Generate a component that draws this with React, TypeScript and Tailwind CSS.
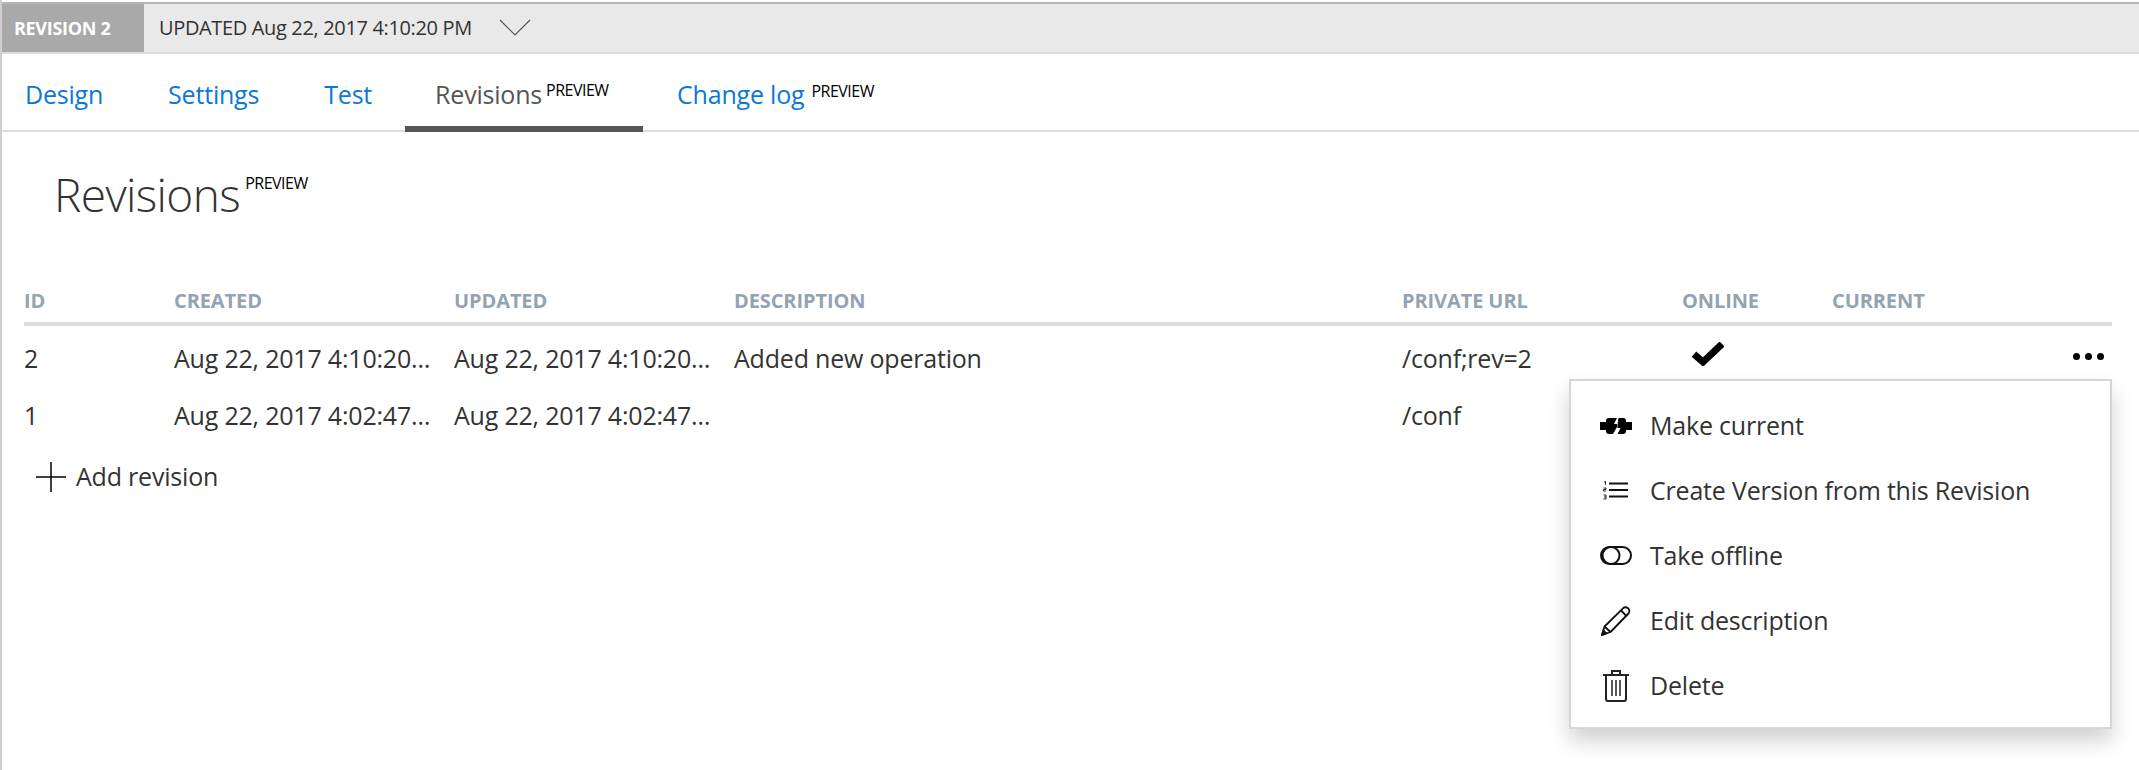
import React from "react";

const font = { fontFamily: '"Open Sans", "Noto Sans", sans-serif' };

const Preview = ({ className }: { className: string }) => (
  <span className={`font-normal text-black tracking-[-0.5px] ${className}`}>PREVIEW</span>
);

const PlugIcon = () => (
  <svg width="32" height="16" viewBox="0 0 32 16" fill="#000">
    <path d="M0 4h6V3q0-3 3-3h8l-3 6h3v3l-4 7H9q-3 0-3-3v-1H0z" />
    <path d="M18.500 0H23q3 0 3 3v1h6v8h-6v1q0 3-3 3h-5.500l3-6h-3V7z" />
  </svg>
);

const ListIcon = () => (
  <svg width="25" height="19" viewBox="0 0 25 19" fill="none" stroke="#111">
    <path d="M6 2.500h19M6 9h19M6 15.500h19" strokeWidth="2" />
    <path d="M1 1l1.500-.5V4M.5 7h2.500v1.500H.5V10H3M.5 14H3v4H.5M1 16h2" strokeWidth="0.9" />
  </svg>
);

const ToggleIcon = () => (
  <svg width="32" height="19" viewBox="0 0 32 19" fill="none" stroke="#111" strokeWidth="2">
    <rect x="1" y="1" width="30" height="17" rx="8.500" />
    <circle cx="11" cy="9.500" r="8.500" />
  </svg>
);

const PencilIcon = () => (
  <svg width="30" height="30" viewBox="0 0 30 30" fill="none" stroke="#111" strokeWidth="1.800" strokeLinejoin="round">
    <path d="M1 29l2.500-8.500L22 2.300q2.500-2 5 0t.5 5.200L9.500 26z" />
    <path d="M3.500 20.500l6 5.500M20 4.500l5.500 5.500" />
    <path d="M1 29l1.300-4.500 3.200 3z" fill="#111" />
  </svg>
);

const TrashIcon = () => (
  <svg width="26" height="32" viewBox="0 0 26 32" fill="none" stroke="#222" strokeWidth="2">
    <path d="M0 5h26M9 5V1h8v4M3 5v24q0 2 2 2h16q2 0 2-2V5" />
    <path d="M9 10v16M13 10v16M17 10v16" strokeWidth="1.500" />
  </svg>
);

const menuItems = [
  { label: "Make current", icon: <PlugIcon /> },
  { label: "Create Version from this Revision", icon: <ListIcon /> },
  { label: "Take offline", icon: <ToggleIcon /> },
  { label: "Edit description", icon: <PencilIcon /> },
  { label: "Delete", icon: <TrashIcon /> },
];

const columns = "grid grid-cols-[150px_280px_280px_668px_280px_150px_1fr]";

const RowMenu = () => (
  <div className="absolute left-[1567px] top-[379px] flex h-[350px] w-[543px] flex-col border-2 border-[#d6d6d6] bg-white pt-[12px] shadow-[0_12px_20px_rgba(0,0,0,0.18)]">
    {menuItems.map((item) => (
      <div key={item.label} className="flex h-[65px] shrink-0 items-center">
        <div className="flex w-[79px] shrink-0 justify-center pl-[10px]">{item.icon}</div>
        <span className="text-[25px] tracking-[-0.2px] text-[#333]">{item.label}</span>
      </div>
    ))}
  </div>
);

export default function App() {
  return (
    <div style={font} className="relative h-[770px] w-[2139px] overflow-hidden border-l-2 border-[#cfcfcf] bg-white">
      <div className="h-[2px] bg-white" />
      {/* revision bar */}
      <div className="flex h-[52px] items-stretch border-t-2 border-b-2 border-t-[#b5b5b5] border-b-[#dcdcdc] bg-[#e9e9e9]">
        <div className="flex w-[142px] items-center bg-[#a9a9a9] pl-[12px] text-[18px] font-bold tracking-[-0.3px] text-white">
          REVISION 2
        </div>
        <div className="ml-[15px] flex items-center text-[20px] tracking-[-0.35px] text-[#333]">
          UPDATED Aug 22, 2017 4:10:20 PM
        </div>
        <svg className="ml-[27px] mt-[15px]" width="32" height="18" viewBox="0 0 32 18" fill="none" stroke="#555" strokeWidth="1.200">
          <path d="M1 1l15 15L31 1" />
        </svg>
      </div>

      {/* tabs */}
      <div className="flex h-[78px] items-stretch border-b-2 border-[#dcdcdc] text-[25px] tracking-[-0.2px] text-[#0b78d7]">
        <div className="ml-[23px] flex items-center pt-[6px]">Design</div>
        <div className="ml-[65px] flex items-center pt-[6px]">Settings</div>
        <div className="ml-[65px] flex items-center pt-[6px]">Test</div>
        <div className="relative ml-[33px] -mb-[2px] flex w-[238px] items-center border-b-[6px] border-[#555] pt-[10px] pl-[30px] text-[#555]">
          Revisions
          <Preview className="mb-[10px] ml-[4px] text-[16px]" />
        </div>
        <div className="ml-[34px] flex items-center pt-[6px]">
          Change log
          <Preview className="mb-[9px] ml-[7px] text-[16px]" />
        </div>
      </div>

      {/* page title */}
      <div className="ml-[52px] mt-[29px] flex h-[71px] items-start">
        <h1 className="text-[46px] leading-[66px] font-light tracking-[-0.6px] text-[#333]">Revisions</h1>
        <Preview className="ml-[5px] mt-[10px] text-[16px]" />
      </div>

      {/* revisions table */}
      <div className="ml-[22px] mt-[54px] w-[2088px]">
        <div className={`${columns} h-[40px] items-center border-b-4 border-[#dcdcdc] pb-[6px] text-[20px] font-bold tracking-[-0.1px] text-[#94a3b1]`}>
          <div>ID</div>
          <div>CREATED</div>
          <div>UPDATED</div>
          <div>DESCRIPTION</div>
          <div>PRIVATE URL</div>
          <div>ONLINE</div>
          <div>CURRENT</div>
        </div>
        <div className={`${columns} relative h-[64px] items-center pt-[2px] text-[25px] tracking-[-0.2px] text-[#333]`}>
          <div>2</div>
          <div className="truncate pr-[20px]">Aug 22, 2017 4:10:20 PM</div>
          <div className="truncate pr-[20px]">Aug 22, 2017 4:10:20 PM</div>
          <div>Added new operation</div>
          <div>/conf;rev=2</div>
          <div className="pl-[10px] pb-[10px]">
            <svg width="32" height="24" viewBox="0 0 32 24" fill="none" stroke="#000" strokeWidth="7">
              <path d="M2 12l9 8L30 2" />
            </svg>
          </div>
          <div className="flex justify-end gap-[5px] pb-[6px] pr-[8px]">
            <span className="size-[7px] rounded-full bg-black" />
            <span className="size-[7px] rounded-full bg-black" />
            <span className="size-[7px] rounded-full bg-black" />
          </div>
        </div>
        <div className={`${columns} h-[52px] items-center text-[25px] tracking-[-0.2px] text-[#333]`}>
          <div>1</div>
          <div className="truncate pr-[20px]">Aug 22, 2017 4:02:47 PM</div>
          <div className="truncate pr-[20px]">Aug 22, 2017 4:02:47 PM</div>
          <div />
          <div>/conf</div>
        </div>
        <div className="ml-[12px] flex h-[70px] items-center text-[25px] tracking-[-0.2px] text-[#333]">
          <svg width="30" height="30" viewBox="0 0 30 30" fill="none" stroke="#000" strokeWidth="1.500">
            <path d="M15 0v30M0 15h30" />
          </svg>
          <span className="ml-[10px]">Add revision</span>
        </div>
      </div>

      <RowMenu />
    </div>
  );
}
